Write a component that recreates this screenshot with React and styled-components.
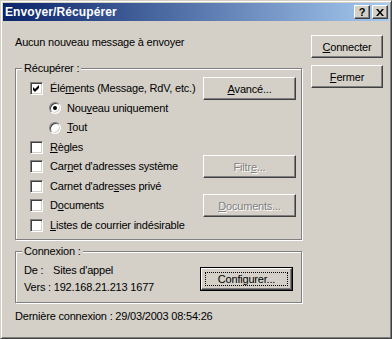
import React from 'react';
import styled, { createGlobalStyle } from 'styled-components';

const GlobalStyle = createGlobalStyle`
    html, body {
        margin: 0;
        padding: 0;
        background: #d4d0c8;
    }
    body {
        font-family: "Liberation Sans", Arial, sans-serif;
        font-size: 11px;
        letter-spacing: -0.2px;
        color: #000;
    }
`;

const Window = styled.div`
    box-sizing: border-box;
    width: 392px;
    height: 339px;
    padding: 2px;
    background: #d4d0c8;
    border: 1px solid;
    border-color: #d4d0c8 #404040 #404040 #d4d0c8;
    box-shadow: inset 1px 1px 0 #fff, inset -1px -1px 0 #808080;
    display: flex;
    flex-direction: column;
`;

const TitleBar = styled.div`
    height: 18px;
    display: flex;
    align-items: center;
    padding: 0 1px 0 2px;
    background: linear-gradient(to right, #0a246a, #a6caf0);
`;

const Title = styled.div`
    flex: 1;
    color: #fff;
    font-weight: bold;
    font-size: 12px;
    letter-spacing: 0.1px;
`;

const CaptionButton = styled.div`
    box-sizing: border-box;
    width: 16px;
    height: 14px;
    margin-left: ${p => p.$gap || 0}px;
    background: #d4d0c8;
    border: 1px solid;
    border-color: #fff #404040 #404040 #fff;
    box-shadow: inset -1px -1px 0 #808080;
    display: flex;
    align-items: center;
    justify-content: center;
    font-weight: bold;
    font-size: 11px;
    line-height: 12px;
`;

const Client = styled.div`
    flex: 1;
    display: grid;
    grid-template-columns: 288px 72px;
    column-gap: 8px;
    align-items: start;
    padding: 14px 0 0 12px;
`;

const LeftColumn = styled.div`
    display: flex;
    flex-direction: column;
`;

const RightColumn = styled.div`
    display: flex;
    flex-direction: column;
    gap: 7px;
`;

const Line = styled.div`
    line-height: 13px;
    height: 13px;
    white-space: nowrap;
    margin-top: ${p => p.$top || 0}px;
`;

const Group = styled.div`
    position: relative;
    box-sizing: border-box;
    width: 287px;
    margin-top: ${p => p.$top}px;
    border: 1px solid #808080;
    box-shadow: inset 1px 1px 0 #fff, 1px 1px 0 #fff;
`;

const Legend = styled.div`
    position: absolute;
    top: -7px;
    left: 6px;
    padding: 0 2px;
    line-height: 13px;
    background: #d4d0c8;
    white-space: nowrap;
`;

const OptionGrid = styled.div`
    display: grid;
    grid-template-columns: 1fr 93px;
    grid-template-rows: repeat(8, 19.5px);
    padding: 10px 5px 4px 14px;
    align-items: center;
`;

const Option = styled.label`
    grid-column: 1;
    display: flex;
    align-items: center;
    gap: ${p => (p.$radio ? 6 : 7)}px;
    padding-left: ${p => (p.$indent ? 19 : 0)}px;
    white-space: nowrap;
    line-height: 13px;
`;

const Box = styled.span`
    box-sizing: border-box;
    width: 13px;
    height: 13px;
    flex: none;
    background: #fff;
    border: 1px solid;
    border-color: #808080 #fff #fff #808080;
    box-shadow: inset 1px 1px 0 #404040, inset -1px -1px 0 #d4d0c8;
    display: flex;
    align-items: center;
    justify-content: center;
`;

const Radio = styled.span`
    position: relative;
    box-sizing: border-box;
    width: 12px;
    height: 12px;
    flex: none;
    border-radius: 50%;
    background: #fff;
    border: 1px solid;
    border-color: #808080 #fff #fff #808080;
    box-shadow: inset 1px 1px 0 #404040, inset -1px -1px 0 #d4d0c8;

    &::after {
        content: '';
        display: ${p => (p.$on ? 'block' : 'none')};
        position: absolute;
        left: 3px;
        top: 3px;
        width: 4px;
        height: 4px;
        border-radius: 50%;
        background: #000;
    }
`;

const Button = styled.div`
    box-sizing: border-box;
    width: ${p => p.$w}px;
    height: 23px;
    grid-column: ${p => p.$col || 'auto'};
    grid-row: ${p => p.$row || 'auto'};
    align-self: center;
    background: #d4d0c8;
    border: 1px solid;
    border-color: #fff #404040 #404040 #fff;
    box-shadow: inset -1px -1px 0 #808080, inset 1px 1px 0 #d4d0c8;
    display: flex;
    align-items: center;
    justify-content: center;
    white-space: nowrap;
    color: ${p => (p.$disabled ? '#808080' : '#000')};
    text-shadow: ${p => (p.$disabled ? '1px 1px 0 #fff' : 'none')};
`;

const DefaultFrame = styled.div`
    box-sizing: border-box;
    width: 93px;
    height: 24px;
    border: 1px solid #000;
    display: flex;
`;

const DefaultButton = styled(Button)`
    width: 91px;
    height: 22px;
    position: relative;

    &::after {
        content: '';
        position: absolute;
        inset: 3px;
        border: 1px dotted #000;
    }
`;

const U = styled.span`
    text-decoration: underline;
    text-underline-offset: 1px;
`;

const ConnexionBody = styled.div`
    display: flex;
    align-items: center;
    justify-content: space-between;
    padding: 10px 8px 6px 8px;
`;

const InfoText = styled.div`
    line-height: 17px;
    white-space: nowrap;
`;

const FieldLabel = styled.span`
    display: inline-block;
    width: 29px;
`;

function Check() {
    return (
        <svg width="7" height="7" viewBox="0 0 7 7">
            <path d="M0 2 L2 4 L6 0 L6 3 L2 7 L0 5 Z" fill="#000" />
        </svg>
    );
}

const options = [
    { key: 'elements', checked: true, label: <>Élé<U>m</U>ents (Message, RdV, etc.)</> },
    { key: 'nouveau', radio: true, on: true, label: <>Nou<U>v</U>eau uniquement</> },
    { key: 'tout', radio: true, label: <><U>T</U>out</> },
    { key: 'regles', label: <><U>R</U>ègles</> },
    { key: 'carnetsys', label: <>Car<U>n</U>et d'adresses système</> },
    { key: 'carnetpriv', label: <>Carnet d'adre<U>s</U>ses privé</> },
    { key: 'documents', label: <>D<U>o</U>cuments</> },
    { key: 'listes', label: <><U>L</U>istes de courrier indésirable</> },
];

export default function App() {
    return (
        <>
            <GlobalStyle />
            <Window>
                <TitleBar>
                    <Title>Envoyer/Récupérer</Title>
                    <CaptionButton>?</CaptionButton>
                    <CaptionButton $gap={2}>
                        <svg width="8" height="7" viewBox="0 0 8 7">
                            <path d="M0 0 H2 L4 2.5 L6 0 H8 L5 3.5 L8 7 H6 L4 4.5 L2 7 H0 L3 3.5 Z" fill="#000" />
                        </svg>
                    </CaptionButton>
                </TitleBar>
                <Client>
                    <LeftColumn>
                        <Line $top={1}>Aucun nouveau message à envoyer</Line>
                        <Group $top={19}>
                            <Legend>Récupérer :</Legend>
                            <OptionGrid>
                                {options.map((o, i) => (
                                    <Option key={o.key} $indent={o.radio} $radio={o.radio} style={{ gridRow: i + 1 }}>
                                        {o.radio ? <Radio $on={o.on} /> : <Box>{o.checked && <Check />}</Box>}
                                        <span>{o.label}</span>
                                    </Option>
                                ))}
                                <Button $w={93} $col={2} $row={1}><U>A</U>vancé...</Button>
                                <Button $w={93} $col={2} $row={5} $disabled>Filtr<U>e</U>...</Button>
                                <Button $w={93} $col={2} $row={7} $disabled><U>D</U>ocuments...</Button>
                            </OptionGrid>
                        </Group>
                        <Group $top={11}>
                            <Legend>Connexion :</Legend>
                            <ConnexionBody>
                                <InfoText>
                                    <div><FieldLabel>De :</FieldLabel>Sites d'appel</div>
                                    <div>Vers : 192.168.21.213 1677</div>
                                </InfoText>
                                <DefaultFrame>
                                    <DefaultButton $w={91}>Confi<U>g</U>urer...</DefaultButton>
                                </DefaultFrame>
                            </ConnexionBody>
                        </Group>
                        <Line $top={7}>Dernière connexion : 29/03/2003 08:54:26</Line>
                    </LeftColumn>
                    <RightColumn>
                        <Button $w={72}><U>C</U>onnecter</Button>
                        <Button $w={72}><U>F</U>ermer</Button>
                    </RightColumn>
                </Client>
            </Window>
        </>
    );
}
